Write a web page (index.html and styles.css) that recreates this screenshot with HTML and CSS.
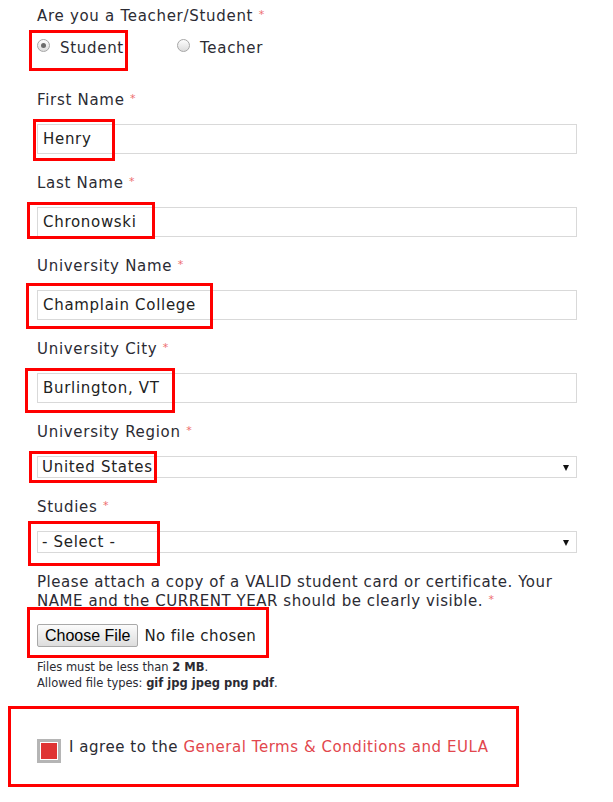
FILE: index.html
```html
<!DOCTYPE html>
<html>
<head>
<meta charset="utf-8">
<link rel="stylesheet" href="styles.css">
</head>
<body>
<form class="form">
  <div class="field field-radio">
    <div class="label">Are you a Teacher/Student <span class="req">*</span></div>
    <div class="radios">
      <label class="radio"><span class="dot checked"></span>Student</label>
      <label class="radio"><span class="dot"></span>Teacher</label>
    </div>
  </div>

  <div class="field">
    <div class="label">First Name <span class="req">*</span></div>
    <div class="input">Henry</div>
  </div>
  <div class="field">
    <div class="label">Last Name <span class="req">*</span></div>
    <div class="input">Chronowski</div>
  </div>
  <div class="field">
    <div class="label">University Name <span class="req">*</span></div>
    <div class="input">Champlain College</div>
  </div>
  <div class="field">
    <div class="label">University City <span class="req">*</span></div>
    <div class="input">Burlington, VT</div>
  </div>
  <div class="field">
    <div class="label">University Region <span class="req">*</span></div>
    <div class="select">United States<span class="arrow"></span></div>
  </div>
  <div class="field field-studies">
    <div class="label">Studies <span class="req">*</span></div>
    <div class="select">- Select -<span class="arrow"></span></div>
  </div>

  <div class="field field-file">
    <p class="note">Please attach a copy of a VALID student card or certificate. Your NAME and the CURRENT YEAR should be clearly visible.&nbsp;<span class="req">*</span></p>
    <div class="file"><span class="file-btn">Choose File</span><span class="file-name">No file chosen</span></div>
    <div class="help">Files must be less than <b>2 MB</b>.<br>Allowed file types: <b>gif jpg jpeg png pdf</b>.</div>
  </div>

  <div class="agree">
    <span class="check"><span class="check-fill"></span></span>
    <span class="agree-text">I agree to the <a class="link">General Terms &amp; Conditions and EULA</a></span>
  </div>
</form>

<div class="marks">
  <div class="mark m1"></div>
  <div class="mark m2"></div>
  <div class="mark m3"></div>
  <div class="mark m4"></div>
  <div class="mark m5"></div>
  <div class="mark m6"></div>
  <div class="mark m7"></div>
  <div class="mark m8"></div>
  <div class="mark m9"></div>
</div>
</body>
</html>
```

FILE: styles.css
```css
html, body {
  margin: 0;
  padding: 0;
  background: #fff;
}
body {
  font-family: "DejaVu Sans", "Noto Sans", sans-serif;
  color: #2b2b33;
  font-size: 15px;
  letter-spacing: 0.7px;
  width: 613px;
  height: 802px;
  position: relative;
  overflow: hidden;
}
.form {
  padding: 5px 36px 0 37px;
  display: flex;
  flex-direction: column;
}
.field {
  display: flex;
  flex-direction: column;
  margin-bottom: 18px;
}
.label {
  line-height: 20px;
  height: 20px;
  padding-top: 1px;
  margin-bottom: 14px;
}
.req {
  color: #ee6e6e;
  font-size: 11px;
  line-height: 0;
  vertical-align: 3px;
  letter-spacing: 0;
}
.field-radio .label {
  margin-bottom: 12px;
}
.field-radio {
  margin-bottom: 31px;
}
.radios {
  display: flex;
  line-height: 20px;
}
.radio {
  display: flex;
  align-items: center;
  width: 140px;
}
.dot {
  width: 11px;
  height: 11px;
  border: 1px solid #a6a6a6;
  border-radius: 50%;
  background: linear-gradient(#fdfdfd, #dcdcdc);
  margin-right: 10px;
  margin-top: -6px;
  position: relative;
  flex: none;
}
.dot.checked::after {
  content: "";
  position: absolute;
  left: 3px;
  top: 3px;
  width: 5px;
  height: 5px;
  border-radius: 50%;
  background: #6b6b6b;
}
.input {
  height: 28px;
  border: 1px solid #d9d9d9;
  line-height: 28px;
  padding-left: 5px;
  color: #222;
}
.select {
  height: 20px;
  border: 1px solid #d9d9d9;
  line-height: 20px;
  padding-left: 4px;
  position: relative;
  color: #222;
}
.arrow {
  position: absolute;
  right: 7px;
  top: 8px;
  width: 0;
  height: 0;
  border-left: 3.5px solid transparent;
  border-right: 3.5px solid transparent;
  border-top: 6px solid #111;
}
.field-studies {
  margin-bottom: 18px;
}
.note {
  margin: 2px 0 13px 0;
  line-height: 19px;
  letter-spacing: 0.55px;
}
.file {
  display: flex;
  align-items: center;
  height: 23px;
}
.file-btn {
  font-family: "Liberation Sans", Arial, sans-serif;
  font-size: 16px;
  letter-spacing: 0;
  color: #000;
  height: 21px;
  line-height: 21px;
  padding: 0 7px;
  border: 1px solid #a9a9a9;
  border-radius: 2px;
  background: linear-gradient(#fbfbfb, #dddddd);
  margin-right: 6px;
}
.file-name {
  color: #222;
  letter-spacing: 0.4px;
}
.help {
  margin-top: 12px;
  font-size: 11.5px;
  letter-spacing: 0;
  line-height: 16px;
}
.help b {
  font-weight: 600;
}
.agree {
  display: flex;
  align-items: center;
  margin-top: 30px;
}
.check {
  width: 18px;
  height: 18px;
  border: 3px solid #b5b5b5;
  background: #fff;
  display: flex;
  align-items: center;
  justify-content: center;
  margin-right: 8px;
  flex: none;
}
.check-fill {
  width: 16px;
  height: 16px;
  background: #df3434;
}
.agree-text {
  margin-top: -8px;
  letter-spacing: 0.55px;
}
.link {
  color: #e2474d;
}

.marks {
  position: absolute;
  left: 0;
  top: 0;
  width: 0;
  height: 0;
}
.mark {
  position: absolute;
  border: 3px solid #ff0000;
  box-sizing: border-box;
}
.m1 { left: 29px; top: 30px; width: 99px; height: 41px; }
.m2 { left: 33px; top: 119px; width: 82px; height: 42px; }
.m3 { left: 27px; top: 202px; width: 128px; height: 37px; }
.m4 { left: 26px; top: 283px; width: 187px; height: 46px; }
.m5 { left: 25px; top: 368px; width: 150px; height: 45px; }
.m6 { left: 29px; top: 451px; width: 128px; height: 32px; }
.m7 { left: 28px; top: 521px; width: 132px; height: 45px; }
.m8 { left: 27px; top: 607px; width: 242px; height: 51px; }
.m9 { left: 8px; top: 706px; width: 511px; height: 81px; }
```
